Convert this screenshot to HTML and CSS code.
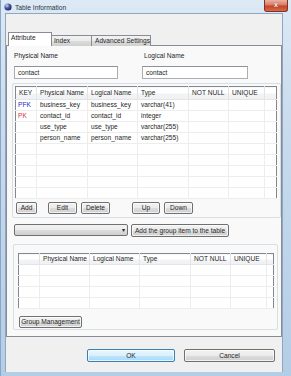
FILE: index.html
```html
<!DOCTYPE html>
<html lang="en">
<head>
  <meta charset="UTF-8">
  <title>Table Information</title>
  <link rel="stylesheet" href="styles.css">
</head>
<body>
  <div class="window">
    <div class="titlebar">
      <svg class="app-icon" width="8" height="8" viewBox="0 0 8 8">
        <defs>
          <radialGradient id="globe" cx="35%" cy="30%" r="70%">
            <stop offset="0" stop-color="#c9d8f5"/>
            <stop offset="0.5" stop-color="#4a5fa8"/>
            <stop offset="1" stop-color="#1d2760"/>
          </radialGradient>
        </defs>
        <circle cx="4" cy="4" r="3.6" fill="url(#globe)"/>
      </svg>
      <span class="title">Table Information</span>
      <div class="close-btn">x</div>
    </div>

    <div class="client">
      <div class="tabs">
        <div class="tab selected">Attribute</div>
        <div class="tab">Index</div>
        <div class="tab">Advanced Settings</div>
      </div>

      <div class="panel">
        <div class="fields">
          <div class="label">Physical Name</div>
          <div class="label second">Logical Name</div>
          <div class="input">contact</div>
          <div class="input">contact</div>
        </div>

        <div class="group columns-box">
          <table class="grid">
            <colgroup>
              <col style="width:21px"><col style="width:51px"><col style="width:50px">
              <col style="width:51px"><col style="width:40px"><col style="width:36px"><col>
            </colgroup>
            <thead>
              <tr><th>KEY</th><th>Physical Name</th><th>Logical Name</th><th>Type</th><th>NOT NULL</th><th>UNIQUE</th><th></th></tr>
            </thead>
            <tbody>
              <tr><td class="pfk">PFK</td><td>business_key</td><td>business_key</td><td>varchar(41)</td><td></td><td></td><td></td></tr>
              <tr><td class="pk">PK</td><td>contact_id</td><td>contact_id</td><td>integer</td><td></td><td></td><td></td></tr>
              <tr><td></td><td>use_type</td><td>use_type</td><td>varchar(255)</td><td></td><td></td><td></td></tr>
              <tr><td></td><td>person_name</td><td>person_name</td><td>varchar(255)</td><td></td><td></td><td></td></tr>
              <tr><td></td><td></td><td></td><td></td><td></td><td></td><td></td></tr>
              <tr><td></td><td></td><td></td><td></td><td></td><td></td><td></td></tr>
              <tr><td></td><td></td><td></td><td></td><td></td><td></td><td></td></tr>
              <tr><td></td><td></td><td></td><td></td><td></td><td></td><td></td></tr>
              <tr><td></td><td></td><td></td><td></td><td></td><td></td><td></td></tr>
            </tbody>
          </table>
          <div class="btn-row">
            <button class="btn w-add">Add</button>
            <button class="btn w-edit">Edit</button>
            <button class="btn w-delete">Delete</button>
            <button class="btn w-up">Up</button>
            <button class="btn w-down">Down</button>
          </div>
        </div>

        <div class="group-row">
          <div class="combo"><span class="arrow">&#9662;</span></div>
          <button class="btn w-addgroup">Add the group item to the table</button>
        </div>

        <div class="group lower-box">
          <table class="grid">
            <colgroup>
              <col style="width:21px"><col style="width:50px"><col style="width:50px">
              <col style="width:51px"><col style="width:40px"><col style="width:36px"><col>
            </colgroup>
            <thead>
              <tr><th></th><th>Physical Name</th><th>Logical Name</th><th>Type</th><th>NOT NULL</th><th>UNIQUE</th><th></th></tr>
            </thead>
            <tbody>
              <tr><td></td><td></td><td></td><td></td><td></td><td></td><td></td></tr>
              <tr><td></td><td></td><td></td><td></td><td></td><td></td><td></td></tr>
              <tr><td></td><td></td><td></td><td></td><td></td><td></td><td></td></tr>
              <tr><td></td><td></td><td></td><td></td><td></td><td></td><td></td></tr>
            </tbody>
          </table>
          <button class="btn w-groupmgmt">Group Management</button>
        </div>
      </div>

      <div class="dialog-buttons">
        <button class="btn default w-ok">OK</button>
        <button class="btn w-cancel">Cancel</button>
      </div>
    </div>
  </div>
</body>
</html>
```

FILE: styles.css
```css
html, body {
  margin: 0;
  padding: 0;
  background: #b9d0e8;
}

body {
  font-family: "Liberation Sans", Arial, sans-serif;
  font-size: 6.6px;
  color: #262626;
}

.window {
  width: 291px;
  height: 376px;
  box-sizing: border-box;
  padding: 0 8px 4px 4px;
  display: flex;
  flex-direction: column;
  background: linear-gradient(to bottom, #dde9f5 0%, #cadcee 30%, #b4cde6 100%);
  border-left: 1px solid #8aa6c6;
  overflow: hidden;
}

/* title bar */
.titlebar {
  height: 13px;
  display: flex;
  align-items: center;
  position: relative;
}

.app-icon {
  margin-left: -1px;
  margin-right: 3px;
}

.title {
  color: #2a3440;
  font-size: 6.7px;
  margin-top: 1px;
}

.close-btn {
  position: absolute;
  top: 0;
  right: -5px;
  width: 22px;
  height: 11px;
  border: 1px solid #7a3326;
  border-top: none;
  border-radius: 0 0 3px 3px;
  background: linear-gradient(to bottom, #eab2a2 0%, #db7a62 45%, #c4432a 55%, #d96a47 100%);
  color: #fff;
  font-weight: bold;
  font-size: 7px;
  line-height: 10px;
  text-align: center;
  text-shadow: 0 0 1px #5a1408;
}

/* client area */
.client {
  flex: 1;
  background: #f0f0f0;
  border: 1px solid #8ea6c2;
  border-bottom: none;
  padding: 18px 0 0 0;
  display: flex;
  flex-direction: column;
}

.tabs {
  display: flex;
  align-items: flex-end;
  height: 14px;
  padding-left: 2px;
  margin-bottom: -1px;
  position: relative;
  z-index: 1;
}

.tab {
  box-sizing: border-box;
  height: 11px;
  padding-left: 3px;
  line-height: 10px;
  border: 1px solid #898c95;
  border-bottom: none;
  background: linear-gradient(to bottom, #f2f2f2 0%, #ebebeb 50%, #dddddd 51%, #cfcfcf 100%);
  margin-left: -1px;
}

.tab:nth-child(1) { width: 44px; margin-left: 0; padding-left: 2px; }
.tab:nth-child(2) { width: 41px; padding-left: 2px; }
.tab:nth-child(3) { width: 60px; }

.tab.selected {
  height: 14px;
  background: #fff;
  line-height: 10px;
  position: relative;
  z-index: 2;
}

.panel {
  height: 292px;
  box-sizing: border-box;
  border: 1px solid #898c95;
  background: #f9f9f9;
  padding: 6px 2px 0 5px;
}

.fields {
  display: grid;
  grid-template-columns: 104px 106px;
  column-gap: 24px;
  row-gap: 6px;
  margin-left: 2px;
}

.label {
  height: 8px;
  line-height: 8px;
}

.label.second {
  padding-left: 2px;
}

.input {
  box-sizing: border-box;
  height: 13px;
  line-height: 11px;
  padding-left: 3px;
  background: #fff;
  border: 1px solid #abadb3;
  border-top-color: #8e9196;
}

.group {
  box-sizing: border-box;
  border: 1px solid #d5dfe5;
  border-radius: 2px;
}

.columns-box {
  margin-top: 4px;
  width: 269px;
  padding: 2px 3px 3px 2px;
}

.grid {
  border-collapse: collapse;
  table-layout: fixed;
  background: #fff;
  border: 1px solid #828790;
}

.columns-box .grid {
  width: 262px;
}

.grid th {
  height: 12px;
  padding: 0 0 0 3px;
  font-weight: normal;
  text-align: left;
  white-space: nowrap;
  overflow: hidden;
  background: linear-gradient(to bottom, #ffffff 0%, #ffffff 50%, #f3f4f6 51%, #eef0f3 100%);
  border-right: 1px solid #e3e4e6;
  border-bottom: 1px solid #e3e4e6;
  line-height: 12px;
}

.grid td {
  height: 10px;
  padding: 0 0 0 3px;
  line-height: 10px;
  white-space: nowrap;
  overflow: hidden;
  border-right: 1px solid #ededed;
  border-bottom: 1px solid #ededed;
}

.grid th:last-child, .grid td:last-child {
  border-right: none;
}

.grid td.pfk { color: #2525c8; padding-left: 2px; }
.grid td.pk { color: #e0303a; padding-left: 2px; }

.btn {
  box-sizing: border-box;
  height: 12px;
  padding: 0;
  font-family: inherit;
  font-size: 6.6px;
  line-height: 10px;
  color: #262626;
  border: 1px solid #707070;
  border-radius: 2px;
  background: linear-gradient(to bottom, #f2f2f2 0%, #ebebeb 50%, #dddddd 51%, #cfcfcf 100%);
  box-shadow: inset 0 0 0 1px rgba(255, 255, 255, 0.7);
}

.btn-row {
  display: flex;
  margin-top: 3px;
  padding-left: 1px;
}

.w-add { width: 21px; }
.w-edit { width: 29px; margin-left: 11px; }
.w-delete { width: 29px; margin-left: 4px; }
.w-up { width: 28px; margin-left: 22px; }
.w-down { width: 29px; margin-left: 4px; }

.group-row {
  display: flex;
  align-items: flex-start;
  margin-top: 6px;
  padding-left: 2px;
}

.combo {
  box-sizing: border-box;
  width: 114px;
  height: 12px;
  border: 1px solid #707070;
  border-radius: 2px;
  background: linear-gradient(to bottom, #f2f2f2 0%, #ebebeb 50%, #dddddd 51%, #cfcfcf 100%);
  display: flex;
  justify-content: flex-end;
  align-items: center;
}

.combo .arrow {
  font-size: 6px;
  line-height: 6px;
  margin-right: 2px;
}

.w-addgroup {
  width: 98px;
  height: 13px;
  margin-left: 3px;
}

.lower-box {
  margin-top: 7px;
  margin-left: 1px;
  width: 265px;
  padding: 8px 3px 1px 4px;
}

.lower-box .grid {
  width: 256px;
}

.lower-box .grid th {
  height: 10px;
  line-height: 10px;
}

.w-groupmgmt {
  display: block;
  width: 63px;
  height: 12px;
  margin-top: 7px;
  margin-left: 1px;
}

.dialog-buttons {
  display: flex;
  justify-content: flex-end;
  gap: 9px;
  margin-top: 12px;
  padding-right: 7px;
}

.dialog-buttons .btn {
  height: 13px;
  line-height: 11px;
}

.w-ok { width: 88px; }
.w-cancel { width: 91px; }

.btn.default {
  border-color: #3c7fb1;
  background: linear-gradient(to bottom, #eaf6fd 0%, #d9f0fc 50%, #bee6fd 51%, #a7d9f5 100%);
}
```
